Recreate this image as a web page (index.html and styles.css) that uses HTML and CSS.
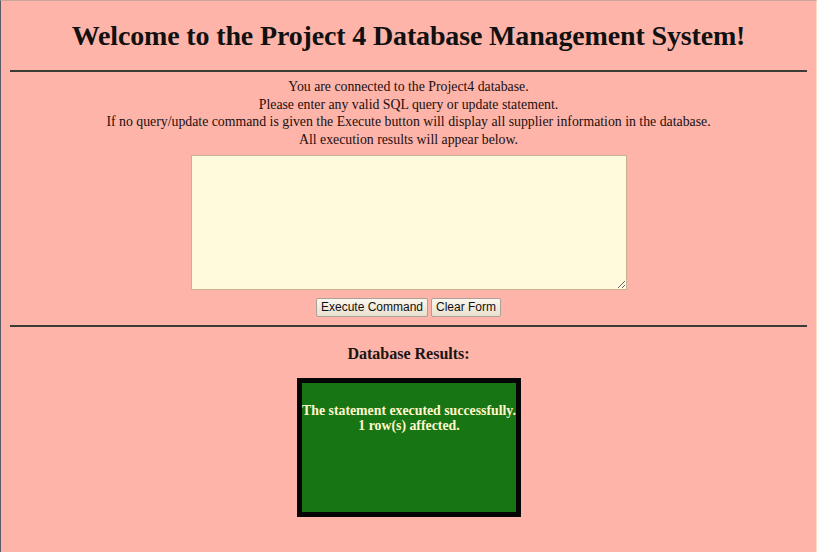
FILE: index.html
```html
<!DOCTYPE html>
<html>
<head>
<meta charset="utf-8">
<title>Project 4</title>
<link rel="stylesheet" href="styles.css">
</head>
<body>
<div class="frame">
  <h1 class="title">Welcome to the Project 4 Database Management System!</h1>
  <hr class="rule">
  <div class="intro">
    <p>You are connected to the Project4 database.</p>
    <p>Please enter any valid SQL query or update statement.</p>
    <p>If no query/update command is given the Execute button will display all supplier information in the database.</p>
    <p>All execution results will appear below.</p>
  </div>
  <form class="form">
    <textarea class="sql"></textarea>
    <div class="buttons">
      <button type="button" class="btn">Execute Command</button>
      <button type="button" class="btn">Clear Form</button>
    </div>
  </form>
  <hr class="rule rule2">
  <h2 class="results-title">Database Results:</h2>
  <div class="result-wrap">
    <div class="result">
      <p>The statement executed successfully.</p>
      <p>1 row(s) affected.</p>
    </div>
  </div>
</div>
</body>
</html>
```
FILE: styles.css
```css
html, body {
  margin: 0;
  padding: 0;
  height: 100%;
}
body {
  background: #ffb4a9;
  font-family: "Liberation Serif", "Times New Roman", serif;
  color: #1a1010;
}
.frame {
  box-sizing: border-box;
  height: 552px;
  border-left: 1px solid #5a5a66;
  border-top: 1px solid #c9a79b;
  border-right: 1px solid #ffd8c8;
  padding: 0 9px;
  overflow: hidden;
}
.title {
  margin: 0;
  padding-top: 19px;
  height: 51px;
  box-sizing: border-box;
  text-align: center;
  font-size: 28px;
  letter-spacing: -0.15px;
  font-weight: bold;
  color: #111;
}
.rule {
  margin: 0;
  border: 0;
  height: 2px;
  background: #3c3c36;
  margin-top: 18px;
}
.intro {
  text-align: center;
  font-size: 13.8px;
  line-height: 17.7px;
  margin-top: 6px;
}
.intro p {
  margin: 0;
}
.form {
  display: flex;
  flex-direction: column;
  align-items: center;
  margin-top: 6px;
}
.sql {
  width: 436px;
  height: 135px;
  box-sizing: border-box;
  background: #fffadc;
  border: 1px solid #c6b296;
  margin: 0;
  resize: both;
}
.buttons {
  display: flex;
  gap: 3px;
  margin-top: 8px;
}
.btn {
  font-family: "Liberation Sans", Arial, sans-serif;
  font-size: 12px;
  height: 19px;
  padding: 0 4px;
  border: 1px solid #a8a29a;
  border-radius: 2px;
  background: linear-gradient(#fbf7ee, #e9e0cf);
  color: #111;
}
.rule2 {
  margin-top: 8px;
}
.results-title {
  margin: 18px 0 0;
  text-align: center;
  font-size: 16px;
  font-weight: bold;
  color: #1a1414;
}
.result-wrap {
  display: flex;
  justify-content: center;
  margin-top: 15px;
  padding-left: 1px;
}
.result {
  width: 224px;
  height: 139px;
  box-sizing: border-box;
  border: 5px solid #050505;
  background: #187514;
  color: #fff8cc;
  text-align: center;
  font-weight: bold;
  font-size: 13.8px;
  line-height: 15.5px;
  padding-top: 20px;
}
.result p {
  margin: 0;
  white-space: nowrap;
}
```
